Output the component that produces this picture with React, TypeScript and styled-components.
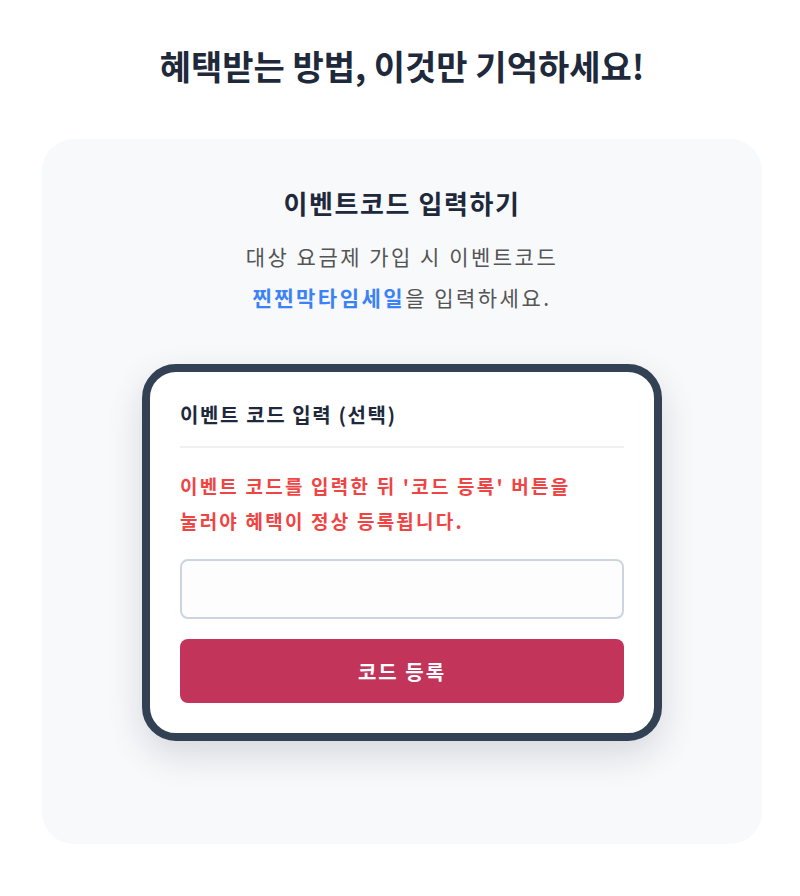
import React, { useState } from "react";
import styled, { createGlobalStyle } from "styled-components";

const GlobalStyle = createGlobalStyle`
  body {
    margin: 0;
    background: #ffffff;
    font-family: "Noto Sans CJK KR", "Noto Sans", sans-serif;
  }
`;

const Page = styled.div`
  width: 800px;
  padding: 43px 38px 50px 42px;
  box-sizing: border-box;
`;

const Heading = styled.h1`
  margin: 0 0 50px;
  text-align: center;
  font-size: 34px;
  line-height: 46px;
  font-weight: 700;
  color: #1e293b;
`;

const Panel = styled.section`
  width: 720px;
  box-sizing: border-box;
  padding: 47px 0 103px;
  background: #f8f9fb;
  border-radius: 32px;
  display: flex;
  flex-direction: column;
  align-items: center;
`;

const PanelTitle = styled.h2`
  margin: 0 0 16px;
  font-size: 26px;
  line-height: 34px;
  font-weight: 700;
  color: #1e293b;
  letter-spacing: 1.6px;
`;

const Description = styled.p`
  margin: 0 0 46px;
  text-align: center;
  font-size: 21px;
  line-height: 41px;
  letter-spacing: 2.5px;
  color: #555;
`;

const Highlight = styled.strong`
  color: #3b82f6;
  font-weight: 700;
`;

const Card = styled.div`
  width: 520px;
  box-sizing: border-box;
  padding: 30px;
  background: #fff;
  border: 8px solid #334155;
  border-radius: 34px;
  box-shadow: 0 14px 36px rgba(15, 23, 42, 0.14);
  display: flex;
  flex-direction: column;
`;

const CardLabel = styled.div`
  font-size: 20px;
  line-height: 26px;
  font-weight: 700;
  letter-spacing: 1.6px;
  color: #1e293b;
  padding-bottom: 18px;
  border-bottom: 2px solid #eef0f2;
`;

const Notice = styled.p`
  margin: 20px 0 21px;
  font-size: 19px;
  line-height: 35px;
  font-weight: 700;
  letter-spacing: 2.2px;
  color: #ef4444;
`;

const CodeInput = styled.input`
  height: 60px;
  box-sizing: border-box;
  border: 2px solid #cbd5e1;
  border-radius: 8px;
  background: #fdfdfd;
  padding: 0 16px;
  font-size: 18px;
  font-family: inherit;
  outline: none;
`;

const SubmitButton = styled.button`
  margin-top: 20px;
  height: 64px;
  border: none;
  border-radius: 8px;
  background: #c2345a;
  color: #fff;
  font-family: inherit;
  font-size: 20px;
  font-weight: 700;
  letter-spacing: 2px;
  cursor: pointer;
`;

const App = () => {
  const [code, setCode] = useState("");
  return (
    <>
      <GlobalStyle />
      <Page>
        <Heading>혜택받는 방법, 이것만 기억하세요!</Heading>
        <Panel>
          <PanelTitle>이벤트코드 입력하기</PanelTitle>
          <Description>
            대상 요금제 가입 시 이벤트코드
            <br />
            <Highlight>찐찐막타임세일</Highlight>을 입력하세요.
          </Description>
          <Card>
            <CardLabel>이벤트 코드 입력 (선택)</CardLabel>
            <Notice>
              이벤트 코드를 입력한 뒤 '코드 등록' 버튼을
              <br />
              눌러야 혜택이 정상 등록됩니다.
            </Notice>
            <CodeInput value={code} onChange={(e) => setCode(e.target.value)} />
            <SubmitButton>코드 등록</SubmitButton>
          </Card>
        </Panel>
      </Page>
    </>
  );
};

export default App;
